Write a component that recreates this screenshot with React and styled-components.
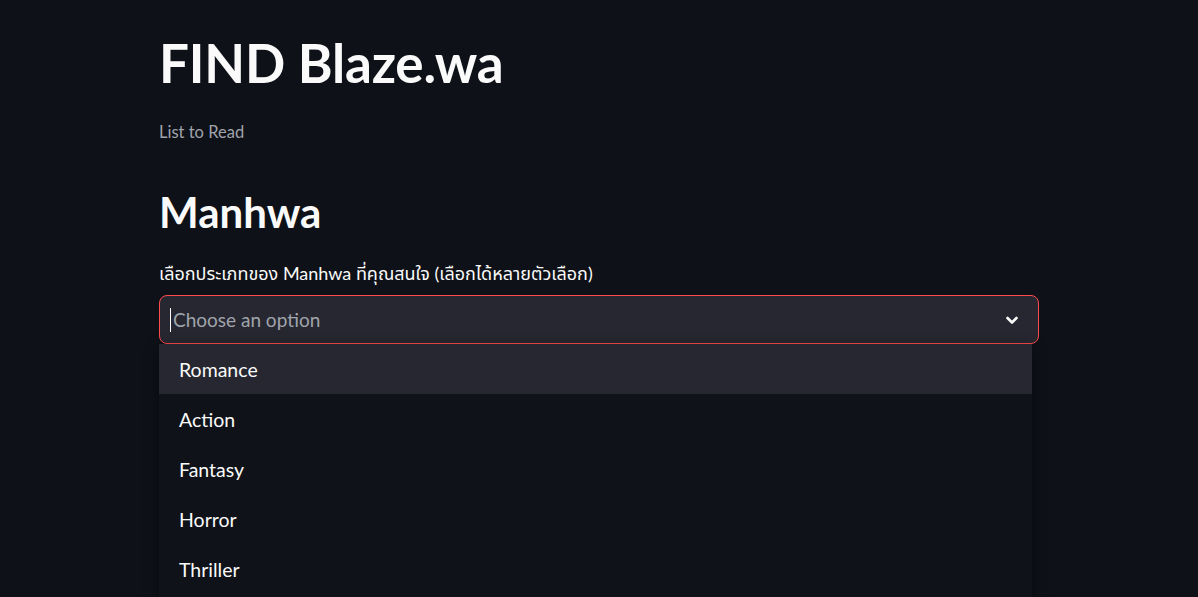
import React from "react";
import styled, { createGlobalStyle } from "styled-components";

const Global = createGlobalStyle`
  html, body { margin: 0; padding: 0; background: #0e1117; }
  body {
    font-family: "Lato", "Noto Sans Thai", "Noto Sans", "DejaVu Sans", sans-serif;
    color: #fafafa;
    overflow: hidden;
  }
  * { box-sizing: border-box; }
`;

const Page = styled.main`
  height: 100vh;
  overflow: hidden;
  background: #0e1117;
`;

const Container = styled.div`
  width: 880px;
  margin: 0 auto;
  padding-top: 31px;
  display: flex;
  flex-direction: column;
`;

const Title = styled.h1`
  margin: 0;
  font-size: 53px;
  font-weight: 700;
  line-height: 64px;
  letter-spacing: -0.2px;
`;

const Caption = styled.p`
  margin: 25px 0 0;
  font-size: 16.5px;
  line-height: 24px;
  color: #a0a4ac;
`;

const Heading = styled.h2`
  margin: 42px 0 0;
  font-size: 42px;
  font-weight: 700;
  line-height: 52px;
`;

const Label = styled.label`
  margin: 23px 0 0;
  font-size: 18px;
  line-height: 24px;
  color: #fafafa;
  display: block;
`;

const SelectWrap = styled.div`
  position: relative;
  margin-top: 10px;
`;

const Control = styled.div`
  height: 49px;
  background: #262730;
  border: 1px solid #ff4b4b;
  border-radius: 8px;
  display: flex;
  align-items: center;
  padding: 0 18px 0 10px;
`;

const Caret = styled.span`
  width: 1px;
  height: 24px;
  background: #fafafa;
  margin-right: 2px;
`;

const Placeholder = styled.span`
  flex: 1;
  font-size: 19px;
  color: #a0a4ac;
`;

const Chevron = styled.svg`
  width: 16px;
  height: 16px;
  display: block;
`;

const Menu = styled.ul`
  position: absolute;
  top: 49px;
  left: 0;
  width: calc(100% - 7px);
  margin: 0;
  padding: 0 0 4px;
  list-style: none;
  background: #0f1218;
  box-shadow: 0 4px 14px rgba(0, 0, 0, 0.45);
`;

const Item = styled.li`
  height: 50px;
  display: flex;
  align-items: center;
  padding-left: 20px;
  font-size: 19.5px;
  color: #fafafa;
  background: ${(p) => (p.$active ? "#262730" : "transparent")};
`;

const options = ["Romance", "Action", "Fantasy", "Horror", "Thriller"];

export default function App() {
  return (
    <Page>
      <Global />
      <Container>
        <Title>FIND Blaze.wa</Title>
        <Caption>List to Read</Caption>
        <Heading>Manhwa</Heading>
        <Label>เลือกประเภทของ Manhwa ที่คุณสนใจ (เลือกได้หลายตัวเลือก)</Label>
        <SelectWrap>
          <Control>
            <Caret />
            <Placeholder>Choose an option</Placeholder>
            <Chevron viewBox="0 0 16 16" fill="none">
              <path d="M3.5 6l4.5 4.5 4.5-4.5" stroke="#fafafa" strokeWidth="2.6" strokeLinecap="round" strokeLinejoin="round" />
            </Chevron>
          </Control>
          <Menu>
            {options.map((o, i) => (
              <Item key={o} $active={i === 0}>{o}</Item>
            ))}
          </Menu>
        </SelectWrap>
      </Container>
    </Page>
  );
}
